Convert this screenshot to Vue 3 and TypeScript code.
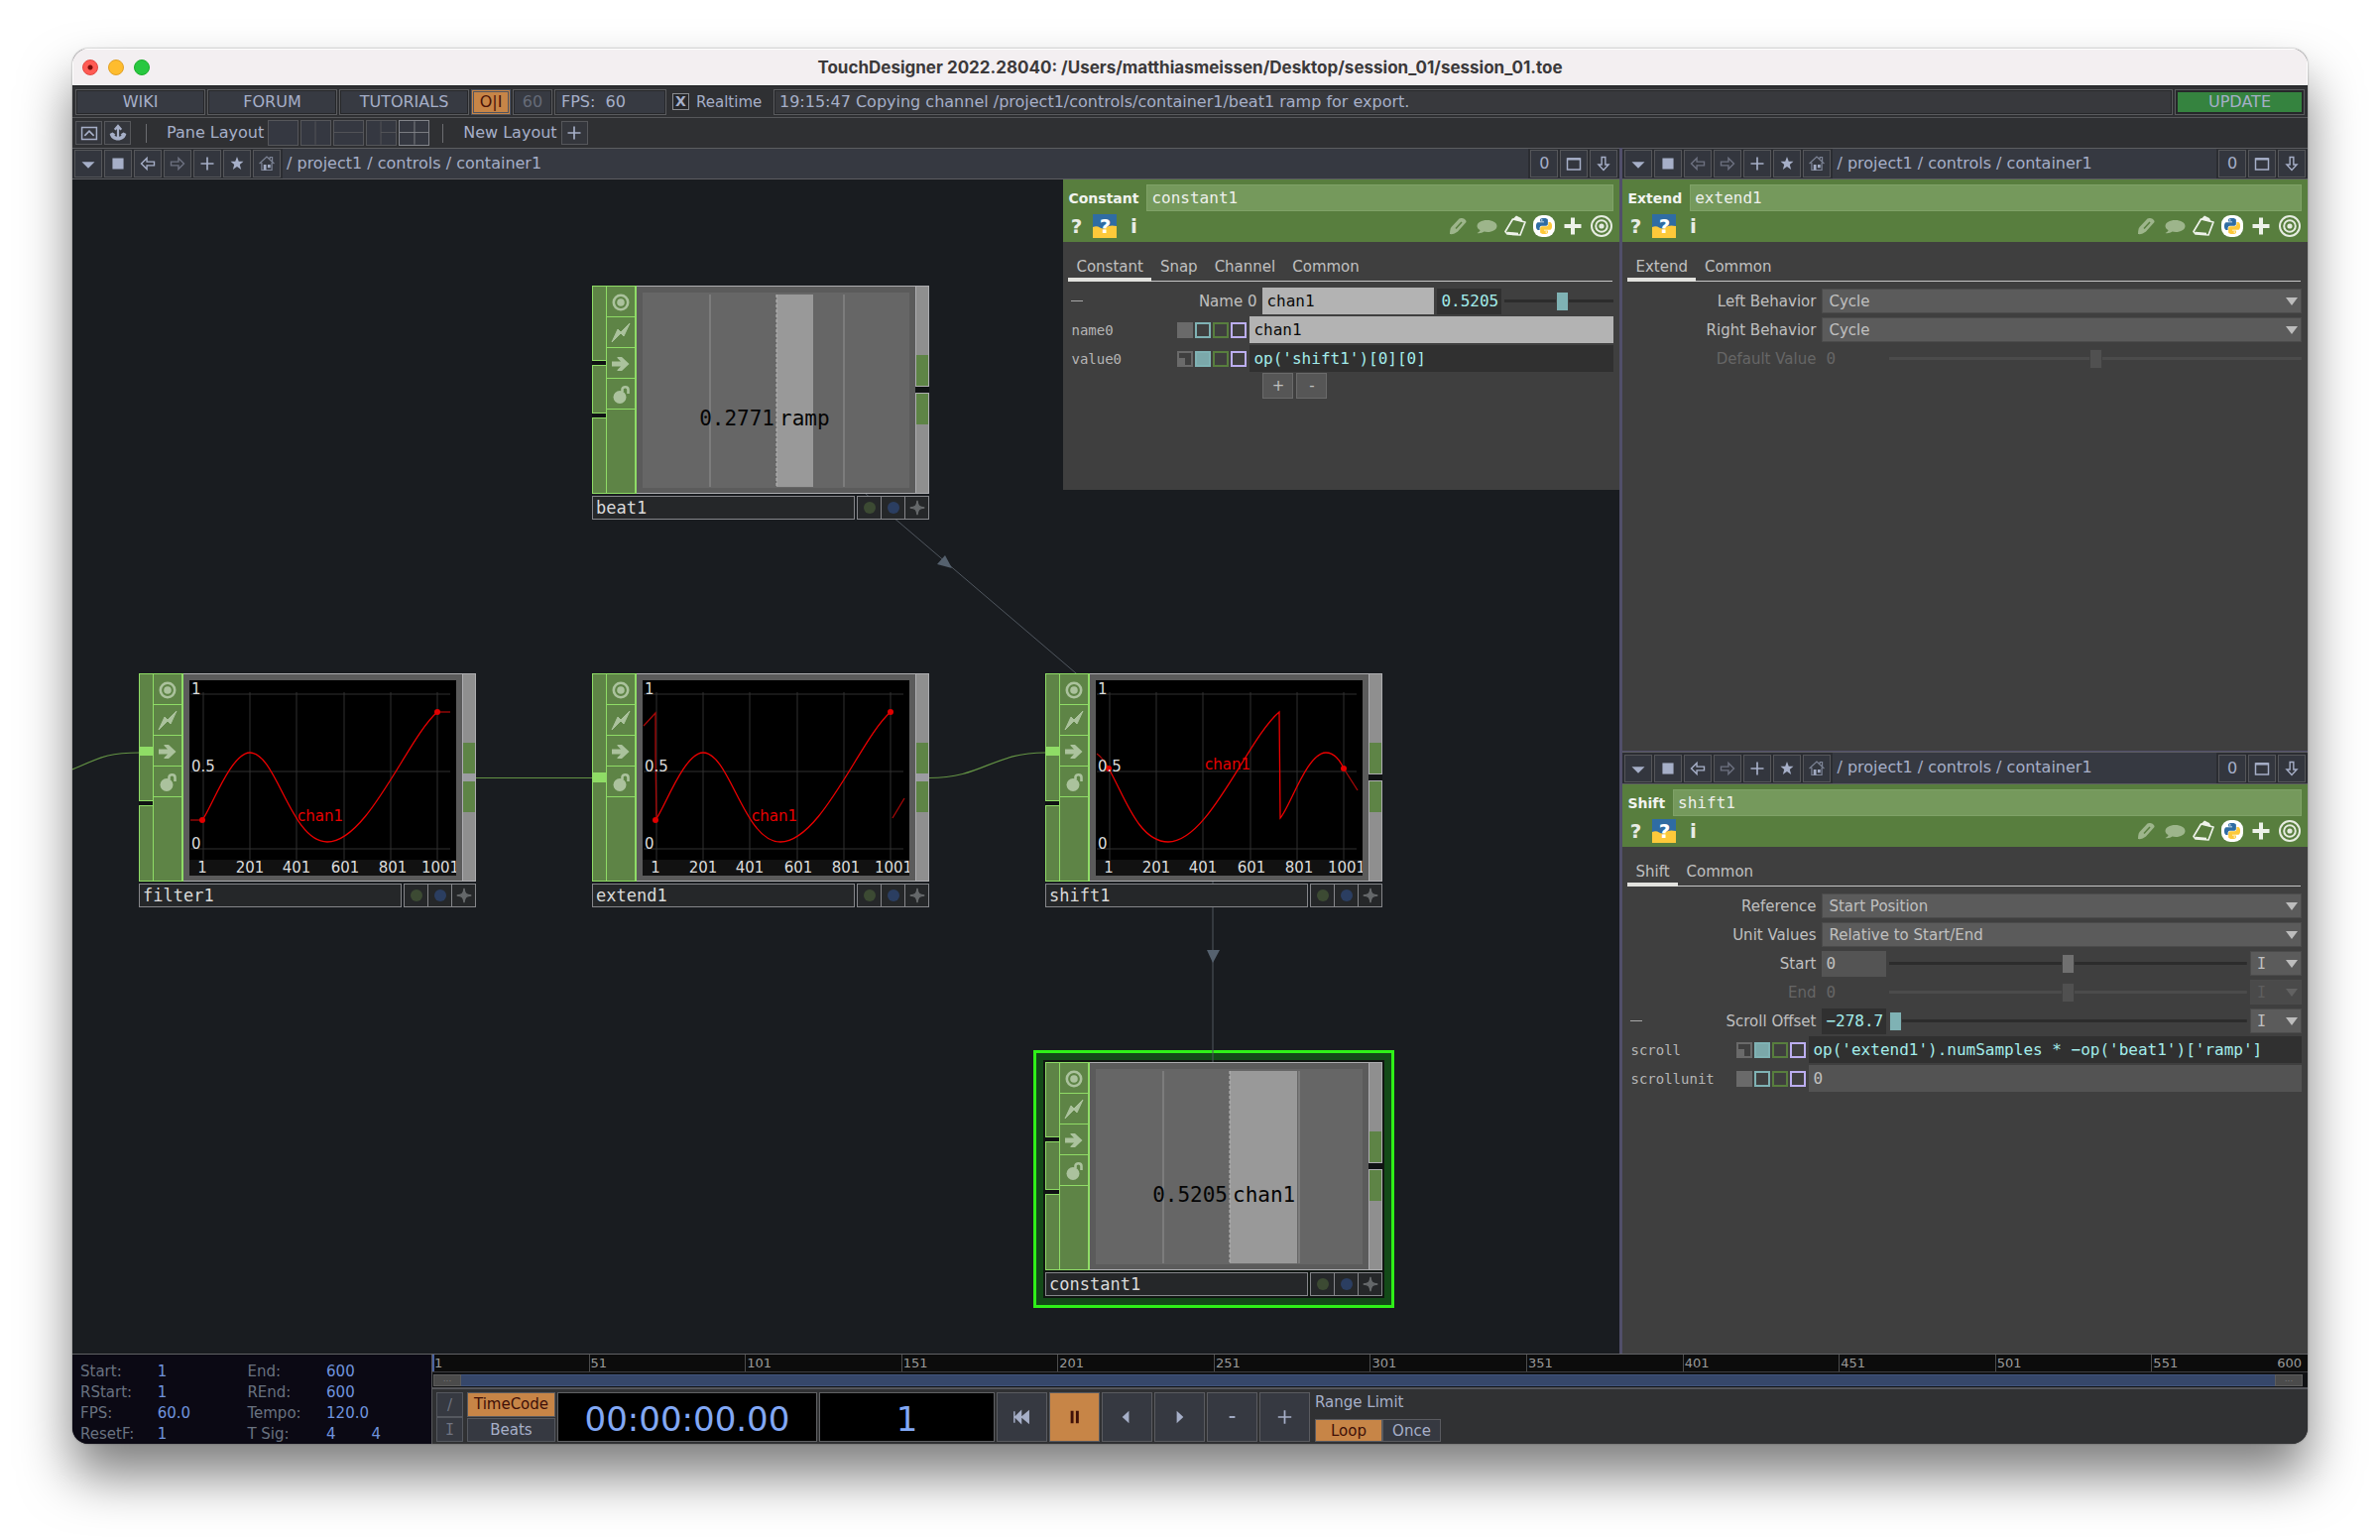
<script setup lang="ts">
interface StripPart { kind: 'seg' | 'gap' | 'wire'; h: number }
interface Meter { value: string; name: string; from: number; to: number; lines: number[] }
interface Graph { main: string; tails: string[]; dots: [number, number][]; label: [number, number] }
interface OpNode {
  name: string
  x: number
  y: number
  selected?: boolean
  inputs: StripPart[]
  wiredOut: boolean
  meter?: Meter
  graph?: Graph
}
interface Row {
  kind: 'menu' | 'number' | 'channel' | 'code' | 'steps'
  label: string
  value: string
  pos?: number
  unit?: boolean
  disabled?: boolean
  driven?: boolean
  open?: boolean
}
interface Sheet { type: string; name: string; tabs: string[]; rows: Row[] }

const twoFree: StripPart[] = [
  { kind: 'seg', h: 76 }, { kind: 'gap', h: 4 }, { kind: 'seg', h: 49 }, { kind: 'gap', h: 4 }, { kind: 'seg', h: 77 },
]
const firstWired: StripPart[] = [
  { kind: 'seg', h: 75 }, { kind: 'wire', h: 7 }, { kind: 'seg', h: 47 }, { kind: 'gap', h: 4 }, { kind: 'seg', h: 77 },
]
const oneWired: StripPart[] = [{ kind: 'seg', h: 101 }, { kind: 'wire', h: 8 }, { kind: 'seg', h: 101 }]

const wave = 'M13 141C22 129 42 73 61 73C88 73 102 163 139 163C180 163 220 58 250 32'

const nodes: OpNode[] = [
  { name: 'beat1', x: 524, y: 107, inputs: twoFree, wiredOut: false,
    meter: { value: '0.2771', name: 'ramp', from: 135, to: 172, lines: [68, 203] } },
  { name: 'filter1', x: 67, y: 498, inputs: firstWired, wiredOut: true,
    graph: { main: wave, tails: ['M1 141H13', 'M250 32H263'], dots: [[13, 141], [250, 32]], label: [109, 142] } },
  { name: 'extend1', x: 524, y: 498, inputs: oneWired, wiredOut: true,
    graph: { main: wave, tails: ['M1 46L13 33V76L14 141', 'M252 139L264 119'], dots: [[13, 141], [250, 32]], label: [110, 142] } },
  { name: 'shift1', x: 981, y: 498, inputs: firstWired, wiredOut: false,
    graph: {
      main: 'M13 89C29 117 43 163 73 163C114 163 153 59 185 32L186 139C196 128 213 73 232 73C239 73 245 78 250 89',
      tails: ['M1 74C5 77 10 83 13 89', 'M250 89L264 111'], dots: [[13, 89], [250, 89]], label: [110, 90],
    } },
  { name: 'constant1', x: 981, y: 890, selected: true, inputs: twoFree, wiredOut: false,
    meter: { value: '0.5205', name: 'chan1', from: 135, to: 203, lines: [68, 205] } },
]

const xTicks = [
  { x: 14, at: 13, t: '1' }, { x: 61, at: 61, t: '201' }, { x: 108, at: 108, t: '401' },
  { x: 156, at: 157, t: '601' }, { x: 203, at: 205, t: '801' }, { x: 250, at: 253, t: '1001' },
]
const yTicks = [{ y: 14, t: '1' }, { y: 92, t: '0.5' }, { y: 170, t: '0' }]
const flags = ['target', 'bolt', 'arrow', 'lock']

const floating: Sheet = {
  type: 'Constant', name: 'constant1', tabs: ['Constant', 'Snap', 'Channel', 'Common'],
  rows: [
    { kind: 'channel', label: 'Name 0', value: '0.5205', pos: 53, open: true },
    { kind: 'code', label: 'name0', value: 'chan1' },
    { kind: 'code', label: 'value0', value: "op('shift1')[0][0]", driven: true },
    { kind: 'steps', label: '', value: '' },
  ],
}
const extendSheet: Sheet = {
  type: 'Extend', name: 'extend1', tabs: ['Extend', 'Common'],
  rows: [
    { kind: 'menu', label: 'Left Behavior', value: 'Cycle' },
    { kind: 'menu', label: 'Right Behavior', value: 'Cycle' },
    { kind: 'number', label: 'Default Value', value: '0', pos: 50, disabled: true },
  ],
}
const shiftSheet: Sheet = {
  type: 'Shift', name: 'shift1', tabs: ['Shift', 'Common'],
  rows: [
    { kind: 'menu', label: 'Reference', value: 'Start Position' },
    { kind: 'menu', label: 'Unit Values', value: 'Relative to Start/End' },
    { kind: 'number', label: 'Start', value: '0', pos: 50, unit: true },
    { kind: 'number', label: 'End', value: '0', pos: 50, unit: true, disabled: true },
    { kind: 'number', label: 'Scroll Offset', value: '−278.7', pos: 0, unit: true, driven: true, open: true },
    { kind: 'code', label: 'scroll', value: "op('extend1').numSamples * −op('beat1')['ramp']", driven: true },
    { kind: 'code', label: 'scrollunit', value: '0' },
  ],
}

const panes: { area: string; sheet: Sheet; back: boolean }[] = [
  { area: 'network', sheet: floating, back: true },
  { area: 'upper', sheet: extendSheet, back: false },
  { area: 'lower', sheet: shiftSheet, back: true },
]

const layouts = ['', 'M15 0V25', 'M0 12H31', 'M15 0V25M15 12H31', 'M16 0V25M0 12H31']
const headIcons = ['pencil', 'bubble', 'note', 'python', 'plusbold', 'rings']
const frames = Array.from({ length: 12 }, (_, i) => i * 50 + 1)
const info = [
  ['Start:', '1', 'End:', '600', ''],
  ['RStart:', '1', 'REnd:', '600', ''],
  ['FPS:', '60.0', 'Tempo:', '120.0', ''],
  ['ResetF:', '1', 'T Sig:', '4', '4'],
]
</script>

<template>
  <svg class="defs" aria-hidden="true">
    <symbol id="i-menu" viewBox="0 0 28 28"><path d="M7 12H21L14 19Z" fill="currentColor" /></symbol>
    <symbol id="i-square" viewBox="0 0 28 28"><path d="M8 8H20V20H8Z" fill="currentColor" /></symbol>
    <symbol id="i-back" viewBox="0 0 28 28"><path d="M7 14L13 8V12H21V16H13V20Z" fill="none" stroke="currentColor" stroke-width="1.5" /></symbol>
    <symbol id="i-next" viewBox="0 0 28 28"><path d="M21 14L15 8V12H7V16H15V20Z" fill="none" stroke="currentColor" stroke-width="1.5" /></symbol>
    <symbol id="i-plus" viewBox="0 0 28 28"><path d="M14 7V21M7 14H21" fill="none" stroke="currentColor" stroke-width="1.8" /></symbol>
    <symbol id="i-star" viewBox="0 0 28 28"><path d="M14 6.500L15.900 11.700H21L17 15.100L18.500 20.500L14 17.300L9.500 20.500L11 15.100L7 11.700H12.100Z" fill="currentColor" /></symbol>
    <symbol id="i-home" viewBox="0 0 28 28">
      <path d="M6 14L14 6.500L22 14M17.500 8.500V7H20V12M8.500 13V21H19.500V13" fill="none" stroke="#7d8496" stroke-width="1.300" />
      <path d="M10.500 15H13.500V21H10.500ZM15 15H18V18.500H15Z" fill="#a3acc4" />
    </symbol>
    <symbol id="i-pane" viewBox="0 0 28 28"><path d="M7 8.500H21V20.500H7Z" fill="none" stroke="currentColor" stroke-width="1.600" /><path d="M7 9H21" stroke="currentColor" stroke-width="2.600" /></symbol>
    <symbol id="i-down" viewBox="0 0 28 28"><path d="M12 7H16V15H19.500L14 21L8.500 15H12Z" fill="none" stroke="currentColor" stroke-width="1.500" /></symbol>
    <symbol id="i-up" viewBox="0 0 28 28"><path d="M6 8H22V21H6Z" fill="none" stroke="currentColor" stroke-width="1.600" /><path d="M9 17L14 12L19 17" fill="none" stroke="currentColor" stroke-width="1.800" /></symbol>
    <symbol id="i-anchor" viewBox="0 0 28 28">
      <path d="M14 6V19M10.500 10.500L14 6.500L17.500 10.500" fill="none" stroke="currentColor" stroke-width="2.400" />
      <path d="M5 15L8 13.500L11.500 15.500C10.500 15.500 10 16 10.500 17C11.500 18.500 16.500 18.500 17.500 17C18 16 17.500 15.500 16.500 15.500L20 13.500L23 15C22 19.500 18.500 22 14 22C9.500 22 6 19.500 5 15Z" fill="currentColor" />
    </symbol>
    <symbol id="i-pencil" viewBox="0 0 24 24"><path d="M4 20C4 17 4.500 14.500 5.500 13L13.500 4.500C15 3 21 4.500 20.500 8L12 17.500C9.500 19.500 6.500 20.500 4 20Z" fill="#9db58b" /><path d="M10 14.500L16 8" stroke="#587e3e" stroke-width="1.500" /></symbol>
    <symbol id="i-bubble" viewBox="0 0 24 24"><path d="M12.500 6C18 6 22.500 8.500 22.500 12C22.500 15.500 18 18 13 18C11.500 18 10.500 17.800 9.500 17.500C7.500 19 5 19.500 2.500 19C4.500 18 5.500 17 5.500 16C3.500 15 2.500 13.500 2.500 12C2.500 8.500 7 6 12.500 6Z" fill="#9db58b" /></symbol>
    <symbol id="i-note" viewBox="0 0 24 24">
      <path d="M9.500 5L22 8L17 21L4 20L2 17.500ZM4 18.500L15 19.500" fill="none" stroke="#eef2ea" stroke-width="1.700" stroke-linejoin="round" />
      <path d="M9.500 5L13 1.500L18 4L20 8Z" fill="#eef2ea" />
    </symbol>
    <symbol id="i-pylogo" viewBox="0 0 24 24"><path d="M14.250.18l.9.200.730.260.590.300.450.320.340.340.250.340.160.330.100.300.040.260.020.200-.010.130V8.500l-.050.630-.130.550-.210.460-.260.380-.300.310-.330.250-.350.190-.350.140-.330.100-.300.070-.260.040-.210.020H8.770l-.690.050-.590.140-.500.220-.410.270-.330.320-.270.350-.200.360-.150.370-.100.350-.070.320-.040.270-.020.210v3.060H3.170l-.210-.030-.280-.070-.320-.120-.350-.180-.360-.260-.360-.360-.350-.460-.320-.590-.280-.730-.210-.880-.140-1.050-.050-1.230.060-1.220.160-1.040.240-.870.320-.710.360-.570.400-.440.420-.330.420-.240.400-.160.360-.100.320-.050.240-.010h.160l.060.010h8.160v-.830H6.180l-.010-2.750-.020-.370.050-.340.110-.310.170-.280.250-.260.310-.230.380-.200.440-.180.510-.150.580-.120.640-.100.710-.060.770-.040.840-.020 1.270.050zm-6.300 1.980l-.230.330-.080.410.080.410.230.340.330.220.410.090.410-.090.330-.220.230-.340.080-.410-.080-.410-.230-.330-.330-.220-.410-.090-.410.090z" /></symbol>
    <symbol id="i-python" viewBox="0 0 24 24">
      <rect x="1" y="1" width="22" height="22" rx="9" fill="#fff" />
      <use href="#i-pylogo" x="4" y="4" width="16" height="16" fill="#2f6ca3" />
      <use href="#i-pylogo" x="4" y="4" width="16" height="16" fill="#fdc93a" transform="rotate(180 12 12)" />
    </symbol>
    <symbol id="i-plusbold" viewBox="0 0 24 24"><path d="M12 3.500V20.500M3.500 12H20.500" stroke="#eef2ea" stroke-width="4" /></symbol>
    <symbol id="i-rings" viewBox="0 0 24 24"><g fill="none" stroke="#e6ece1" stroke-width="2"><circle cx="12" cy="12" r="10" /><circle cx="12" cy="12" r="5.800" /></g><circle cx="12" cy="12" r="2.600" fill="#e6ece1" /></symbol>
    <symbol id="i-target" viewBox="0 0 28 28"><circle cx="14" cy="15" r="7.200" fill="none" stroke="currentColor" stroke-width="2.600" /><circle cx="14" cy="15" r="3.800" fill="currentColor" /></symbol>
    <symbol id="i-bolt" viewBox="0 0 28 28"><path d="M5 24L11 11L14 14L23 5L17 18L14 15Z" fill="currentColor" stroke="currentColor" stroke-width="1" /></symbol>
    <symbol id="i-arrow" viewBox="0 0 28 28"><path d="M5 12.500H14L10.500 9V8H15L22.500 15L15 22H10.500V21L14 17.500H5Z" fill="currentColor" /></symbol>
    <symbol id="i-lock" viewBox="0 0 28 28"><circle cx="13" cy="17.500" r="6.500" fill="currentColor" /><path d="M15.500 12V9.500C15.500 6.500 21.500 6.500 21.500 10V14" fill="none" stroke="currentColor" stroke-width="2.600" /></symbol>
    <symbol id="i-spark" viewBox="0 0 22 22"><path d="M11 3C11.500 9 13 10.500 19 11C13 11.500 11.500 13 11 19C10.500 13 9 11.500 3 11C9 10.500 10.500 9 11 3Z" fill="#65686a" stroke="#65686a" stroke-width="1.500" /></symbol>
  </svg>

  <div class="desk">
    <div class="window">
      <header class="titlebar">
        <div class="lights">
          <button class="lamp red" aria-label="Close"></button>
          <button class="lamp amber" aria-label="Minimise"></button>
          <button class="lamp green" aria-label="Zoom"></button>
        </div>
        <h1>TouchDesigner 2022.28040: /Users/matthiasmeissen/Desktop/session_01/session_01.toe</h1>
      </header>

      <div class="bar status">
        <button class="box wide">WIKI</button>
        <button class="box wide">FORUM</button>
        <button class="box wide">TUTORIALS</button>
        <button class="box small on">O|I</button>
        <button class="box small dim">60</button>
        <div class="box fps">FPS:&nbsp; 60</div>
        <label class="realtime"><input type="checkbox" checked />Realtime</label>
        <div class="box log">19:15:47 Copying channel /project1/controls/container1/beat1 ramp for export.</div>
        <button class="box update"><span>UPDATE</span></button>
      </div>

      <div class="bar layoutbar">
        <button class="tool" aria-label="Collapse"><svg><use href="#i-up" /></svg></button>
        <button class="tool" aria-label="Bookmark"><svg><use href="#i-anchor" /></svg></button>
        <i class="rule"></i>
        <span class="caption">Pane Layout</span>
        <div class="layouts">
          <button v-for="(d, i) in layouts" :key="i" class="layout" :class="{ bright: i === 4 }" :aria-label="'Layout ' + (i + 1)">
            <svg viewBox="0 0 31 25"><path :d="d" /></svg>
          </button>
        </div>
        <i class="rule"></i>
        <span class="caption">New Layout</span>
        <button class="tool" aria-label="Add layout"><svg><use href="#i-plus" /></svg></button>
      </div>

      <main class="panes">
        <section v-for="pane in panes" :key="pane.area" class="pane" :class="pane.area">
          <nav class="pathbar">
            <button class="cell" aria-label="Pane type"><svg><use href="#i-menu" /></svg></button>
            <button class="cell" aria-label="Split"><svg><use href="#i-square" /></svg></button>
            <button class="cell" :class="{ off: !pane.back }" aria-label="Back"><svg><use href="#i-back" /></svg></button>
            <button class="cell off" aria-label="Forward"><svg><use href="#i-next" /></svg></button>
            <button class="cell" aria-label="Add"><svg><use href="#i-plus" /></svg></button>
            <button class="cell" aria-label="Favourites"><svg><use href="#i-star" /></svg></button>
            <button class="cell" aria-label="Home"><svg><use href="#i-home" /></svg></button>
            <span class="path">/ <a href="#project1">project1</a> / <a href="#controls">controls</a> / <a href="#container1">container1</a></span>
            <button class="cell">0</button>
            <button class="cell" aria-label="Maximise"><svg><use href="#i-pane" /></svg></button>
            <button class="cell" aria-label="Pin"><svg><use href="#i-down" /></svg></button>
          </nav>

          <div class="stage">
            <template v-if="pane.area === 'network'">
              <svg class="wires">
                <path d="M0 595C30 582 36 578 68 578M407 603.500H524M864 603.500C918 603.500 928 578 981 578" />
              </svg>

              <article v-for="n in nodes" :key="n.name" class="node" :class="{ selected: n.selected }" :style="{ left: n.x + 'px', top: n.y + 'px' }">
                <div class="body">
                  <div class="strip">
                    <i v-for="(p, i) in n.inputs" :key="i" :class="p.kind" :style="{ height: p.h + 'px' }"></i>
                  </div>
                  <div class="flags">
                    <button v-for="f in flags" :key="f" :aria-label="f"><svg><use :href="'#i-' + f" /></svg></button>
                  </div>
                  <div class="viewer">
                    <svg v-if="n.meter" class="meter" viewBox="0 0 269 197">
                      <rect width="269" height="197" fill="#666" />
                      <rect :x="n.meter.from" y="2" :width="n.meter.to - n.meter.from" height="194" fill="#999" />
                      <path v-for="x in n.meter.lines" :key="x" :d="`M${x} 2V196`" stroke="#858585" stroke-width="1.500" />
                      <path :d="`M${n.meter.from} 2V196`" stroke="#bbb" stroke-dasharray="3 2" />
                      <text x="133" y="134" text-anchor="end">{{ n.meter.value }}</text>
                      <text x="138" y="134">{{ n.meter.name }}</text>
                    </svg>
                    <svg v-if="n.graph" class="graph" viewBox="0 0 269 197">
                      <rect width="269" height="197" />
                      <rect y="181" width="269" height="16" class="foot" />
                      <path v-for="t in xTicks" :key="t.t" :d="`M${t.x} 12V181`" class="grid" />
                      <path v-for="t in yTicks" :key="t.t" :d="`M1 ${t.y}H263`" class="grid" />
                      <path v-for="d in n.graph.tails" :key="d" :d="d" class="curve tail" />
                      <path :d="n.graph.main" class="curve" />
                      <circle v-for="(c, i) in n.graph.dots" :key="i" :cx="c[0]" :cy="c[1]" r="3" fill="#e00000" />
                      <text v-for="t in yTicks" :key="t.t" x="2" :y="t.y">{{ t.t }}</text>
                      <text v-for="t in xTicks" :key="t.t" :x="t.at" y="194" text-anchor="middle">{{ t.t }}</text>
                      <text :x="n.graph.label[0]" :y="n.graph.label[1]" class="chan">chan1</text>
                    </svg>
                  </div>
                  <div class="strip out">
                    <i class="lead"></i>
                    <i class="port"></i>
                    <i :class="n.wiredOut ? 'join' : 'gap'"></i>
                    <i class="port"></i>
                    <i class="rest"></i>
                  </div>
                </div>
                <div class="tag">
                  <span class="opname">{{ n.name }}</span>
                  <button class="dot olive" aria-label="Display"></button>
                  <button class="dot navy" aria-label="Render"></button>
                  <button class="dot" aria-label="Viewer active"><svg><use href="#i-spark" /></svg></button>
                </div>
              </article>

              <svg class="wires refs">
                <path d="M793 311L1032 515M1150 700V892" />
                <path class="head" d="M887 392L872 388L880 379ZM1144 777H1157L1150 790Z" />
              </svg>
            </template>

            <div class="sheet">
              <header class="ophead">
                <div class="opline">
                  <label :for="'op-' + pane.sheet.name">{{ pane.sheet.type }}</label>
                  <input :id="'op-' + pane.sheet.name" :value="pane.sheet.name" />
                </div>
                <div class="opicons">
                  <button class="q">?</button>
                  <button class="q py"><svg viewBox="0 0 24 24"><path d="M0 0H24V24H0Z" fill="#2f6ca3" /><path d="M0 13C6 10 8 16 12 14C17 11 19 11 24 12V24H0Z" fill="#fdc93a" /></svg><span>?</span></button>
                  <button class="q">i</button>
                  <span class="grow"></span>
                  <button v-for="h in headIcons" :key="h" class="hi" :aria-label="h"><svg><use :href="'#i-' + h" /></svg></button>
                </div>
              </header>
              <div class="tabs">
                <button v-for="(t, i) in pane.sheet.tabs" :key="t" :class="{ active: i === 0 }">{{ t }}</button>
              </div>
              <div class="rows">
                <div v-for="r in pane.sheet.rows" :key="r.label" class="row" :class="[r.kind, { disabled: r.disabled, driven: r.driven }]">
                  <template v-if="r.kind === 'code'">
                    <label class="key" :for="pane.sheet.name + r.label">{{ r.label }}</label>
                    <span class="modes"><button class="m1" aria-label="Constant"></button><button class="m2" aria-label="Expression"></button><button class="m3" aria-label="Export"></button><button class="m4" aria-label="Bind"></button></span>
                    <input :id="pane.sheet.name + r.label" class="field" :class="{ pale: r.value === 'chan1' }" :value="r.value" />
                  </template>
                  <template v-else>
                    <span class="lab">
                      <button v-if="r.open" class="fold" aria-label="Fold"></button>
                      <label v-if="r.label" :for="pane.sheet.name + r.label">{{ r.label }}</label>
                    </span>
                    <template v-if="r.kind === 'menu'">
                      <span class="pick grow"><select :id="pane.sheet.name + r.label"><option>{{ r.value }}</option></select></span>
                    </template>
                    <template v-else-if="r.kind === 'steps'">
                      <button class="step">+</button><button class="step">-</button>
                    </template>
                    <template v-else>
                      <input v-if="r.kind === 'channel'" :id="pane.sheet.name + r.label" class="field pale" value="chan1" />
                      <input :id="r.kind === 'channel' ? undefined : pane.sheet.name + r.label" class="num" :class="{ lit: r.driven || r.kind === 'channel' }" :value="r.value" :disabled="r.disabled" :aria-label="r.label + ' value'" />
                      <input type="range" min="0" max="100" :value="r.pos" :class="{ lit: r.driven || r.kind === 'channel' }" :disabled="r.disabled" :aria-label="r.label + ' slider'" />
                      <span v-if="r.unit" class="pick unit"><select :aria-label="r.label + ' unit'" :disabled="r.disabled"><option>I</option></select></span>
                    </template>
                  </template>
                </div>
              </div>
            </div>
          </div>
        </section>
      </main>

      <footer class="timeline">
        <table class="info">
          <tbody>
            <tr v-for="(l, i) in info" :key="i">
              <th>{{ l[0] }}</th><td>{{ l[1] }}</td><th>{{ l[2] }}</th><td>{{ l[3] }}</td><td>{{ l[4] }}</td>
            </tr>
          </tbody>
        </table>
        <div class="transport">
          <div class="ruler">
            <span v-for="f in frames" :key="f">{{ f }}</span>
            <b>600</b>
          </div>
          <div class="range"><i>...</i><span></span><i>...</i></div>
          <div class="controls">
            <div class="stack narrow"><button>/</button><button class="mono">I</button></div>
            <div class="stack units"><button class="on">TimeCode</button><button>Beats</button></div>
            <output class="clock">00:00:00.00</output>
            <output class="clock frame">1</output>
            <button class="play" aria-label="Rewind"><svg viewBox="0 0 50 50"><path d="M17 19V31M24 19V31L18 25ZM32 19V31L25 25Z" fill="currentColor" stroke="currentColor" stroke-width="1.500" /></svg></button>
            <button class="play on" aria-label="Pause"><svg viewBox="0 0 50 50"><path d="M21 18.500H24V31.500H21ZM26.500 18.500H29.500V31.500H26.500Z" fill="currentColor" /></svg></button>
            <button class="play" aria-label="Play reverse"><svg viewBox="0 0 50 50"><path d="M27 18.500V31.500L20 25Z" fill="currentColor" /></svg></button>
            <button class="play" aria-label="Play"><svg viewBox="0 0 50 50"><path d="M22 18.500V31.500L29 25Z" fill="currentColor" /></svg></button>
            <button class="play" aria-label="Step back"><svg viewBox="0 0 50 50"><path d="M22 25H28" stroke="currentColor" stroke-width="2" /></svg></button>
            <button class="play" aria-label="Step forward"><svg viewBox="0 0 50 50"><path d="M25 18V32M18 25H32" stroke="currentColor" stroke-width="1.800" /></svg></button>
            <div class="limit">
              <span>Range Limit</span>
              <div><button class="on">Loop</button><button>Once</button></div>
            </div>
          </div>
        </div>
      </footer>
    </div>
  </div>
</template>

<style>
body { background: #fff; }
</style>

<style scoped>
.defs { position: absolute; width: 0; height: 0; }
.desk {
  box-sizing: border-box;
  min-height: 100vh;
  display: flex;
  padding: 49px 73px 97px;
  font-family: "DejaVu Sans", sans-serif;
  font-size: 15px;
  line-height: 20px;
  color: #a6afc8;
}
.desk *, .desk *::before, .desk *::after { box-sizing: border-box; }
button, input, select { font: inherit; color: inherit; margin: 0; padding: 0; border: 0; border-radius: 0; background: none; }
button { display: flex; align-items: center; justify-content: center; }
input { min-width: 0; }
a { color: inherit; text-decoration: none; }
.grow { flex: 1; }

.window {
  flex: 1;
  min-width: 0;
  display: flex;
  flex-direction: column;
  border-radius: 16px;
  overflow: hidden;
  background: #2f3033;
  box-shadow: 0 0 2px rgba(0, 0, 0, .45), 0 32px 52px rgba(0, 0, 0, .5);
}
.titlebar { position: relative; height: 37px; display: flex; align-items: center; justify-content: center; background: #f3eff1; border: 1px solid #fff; }
.titlebar h1 { margin: 0; font: 700 17px/24px Inter, sans-serif; color: #3b393a; }
.lights { position: absolute; left: 9px; top: 10px; display: flex; gap: 10px; }
.lamp { width: 16px; height: 16px; border-radius: 50%; }
.red { background: radial-gradient(circle, #7b0c0a 0 2px, #ff5b54 3px); border: 1px solid #e2463f; }
.amber { background: #febc2e; border: 1px solid #e0a028; }
.green { background: #28c840; border: 1px solid #1dad2c; }

.bar { display: flex; align-items: center; font-size: 16px; }
.status { height: 32px; padding: 0 3px; gap: 2px; border-top: 1px solid #1c1d20; }
.box { height: 26px; border: 1px solid #5a5b5e; outline: 1px solid #26272a; outline-offset: -2px; background: #373a42; display: flex; align-items: center; justify-content: center; }
.wide { width: 131px; }
.small { width: 40px; }
.box.on { background: #c78547; border: 3px double #50545f; color: #4a1208; outline: 0; }
.dim { color: #666b78; }
.fps { width: 113px; justify-content: flex-start; padding-left: 6px; }
.realtime { display: flex; align-items: center; gap: 7px; width: 104px; padding-left: 4px; font-size: 15px; }
.realtime input { appearance: none; width: 17px; height: 17px; border: 1px solid #8a8c90; background: #26272a; display: flex; align-items: center; justify-content: center; }
.realtime input:checked::after { content: "X"; font: 700 14px/15px "DejaVu Sans", sans-serif; color: #a6afc8; }
.log { flex: 1; justify-content: flex-start; padding-left: 5px; background: #38393d; white-space: nowrap; }
.update { width: 131px; padding: 2px; background: #26272a; }
.update span { flex: 1; background: #35833f; line-height: 20px; }

.layoutbar { height: 31px; padding: 0 3px; border-top: 1px solid #56575a; }
.tool { width: 27px; height: 24px; margin-right: 2px; border: 1px solid #56575b; background: #34363c; }
.tool svg { width: 26px; height: 26px; flex: none; }
.rule { width: 1px; height: 19px; margin: 0 20px 0 13px; background: #6b6c70; }
.caption { margin-right: 4px; }
.layouts { display: flex; gap: 2px; }
.layout { width: 31px; height: 26px; border: 1px solid #55565a; background: #353841; }
.layout svg { width: 100%; height: 100%; }
.layout path { stroke: #55565a; fill: none; }
.layout.bright { border-color: #82848a; }
.layout.bright path { stroke: #82848a; }

.panes { flex: 1; display: grid; grid-template: minmax(0, 1fr) minmax(0, 1fr) / minmax(0, 9fr) minmax(0, 4fr); }
.pane { display: flex; flex-direction: column; min-width: 0; }
.network { grid-row: 1 / 3; }
.upper, .lower { border-left: 3px solid #514f6a; background: #3f3f3f; }
.lower { border-top: 1px solid #514f6a; }
.pathbar { display: flex; align-items: center; gap: 2px; height: 32px; padding: 0 2px; border-top: 1px solid #5c5d61; border-bottom: 1px solid #5c5d61; background: #2b2d32; font-size: 16px; }
.lower .pathbar { height: 33px; }
.cell { width: 28px; height: 28px; flex: none; border: 1px solid #55565a; background: #33363e; }
.cell svg { width: 26px; height: 26px; }
.cell.off svg { color: #6d7180; }
.path { flex: 1; align-self: stretch; background: #363941; padding-left: 4px; line-height: 30px; }
.stage { position: relative; flex: 1; }
.network .stage { background: #191c20; overflow: hidden; }

.wires { position: absolute; inset: 0; width: 100%; height: 100%; }
.wires path { fill: none; stroke: #639244; stroke-width: 1.2; }
.refs { pointer-events: none; }
.refs path { stroke: #50575f; stroke-width: 1; }
.refs .head { fill: #55616e; stroke: none; }

.node { position: absolute; width: 340px; }
.selected::before { content: ""; position: absolute; inset: -12px; border: 3px solid #2ff018; background: #134a18; }
.selected::after { content: ""; position: absolute; inset: -2px; z-index: 0; background: #101612; }
.body { position: relative; z-index: 1; display: flex; height: 210px; }
.strip { width: 14px; display: flex; flex-direction: column; }
.seg { background: #5e8446; border: 1px solid #8fdc66; border-right: 0; }
.wire { background: #8fdc66; }
.gap { background: #101214; }
.flags { width: 31px; background: #5e8446; border: 1px solid #8fdc66; border-right-width: 2px; }
.flags button { width: 100%; height: 31px; border-bottom: 1px solid #8fdc66; color: #abc29d; }
.flags svg { width: 28px; height: 28px; flex: none; }
.viewer { flex: 1; padding: 6px; border: solid #adadb0; border-width: 1px 0; background: #5b5b5b; }
.viewer svg { display: block; width: 100%; height: 197px; }
.meter text { font: 21px "DejaVu Sans Mono", monospace; fill: #050505; }
.graph rect { fill: #000; }
.graph .foot { fill: #111; }
.grid { stroke: #303030; }
.graph text { font: 15px "DejaVu Sans", sans-serif; fill: #dcdcdc; }
.graph .chan { fill: #e80000; }
.curve { fill: none; stroke: #ec0000; stroke-width: 1.3; }
.tail { stroke: #a80808; }
.out { border: 1px solid #adadb0; background: #8f8f8f; }
.lead { height: 69px; }
.port { height: 31px; background: #5e8446; }
.join { height: 8px; background: #9c9ca2; }
.out .gap { height: 8px; border: solid #adadb0; border-width: 1px 0; margin: 0 -1px; }
.rest { flex: 1; }
.tag { position: relative; z-index: 1; display: flex; height: 24px; margin-top: 2px; }
.opname { flex: 1; margin-right: 3px; padding-left: 3px; border: 1px solid #85868a; background: #252729; color: #dadada; font: 17px/22px "DejaVu Sans Mono", monospace; }
.dot { width: 25px; margin-left: -1px; border: 1px solid #85868a; background: #252729; }
.dot::before { content: ""; width: 12px; height: 12px; border-radius: 50%; }
.dot svg { width: 20px; height: 20px; flex: none; }
.dot:last-child::before { display: none; }
.olive::before { background: #3c4a33; }
.navy::before { background: #2b3e61; }

.sheet { background: #3f3f3f; color: #c0c0c0; }
.network .sheet { position: absolute; right: 0; top: 0; width: 561px; height: 313px; }
.ophead { height: 63px; padding: 5px 6px 0 5px; background: #587e3e; }
.opline { display: flex; align-items: center; gap: 8px; }
.opline label { font-weight: 700; font-size: 14px; color: #f1f3ef; }
.opline input { flex: 1; height: 27px; padding-left: 4px; background: #75995c; border: 1px solid #7fa267; color: #eef0ec; font: 16px/25px "DejaVu Sans Mono", monospace; }
.opicons { display: flex; align-items: center; gap: 5px; height: 30px; }
.q { width: 16px; height: 24px; font-weight: 700; font-size: 20px; color: #e8ece5; }
.opicons .q + .q { margin-left: 4px; }
.py { position: relative; width: 24px; color: #fff; }
.py svg { position: absolute; inset: 0; width: 24px; height: 24px; }
.py span { position: relative; }
.hi, .hi svg { width: 24px; height: 24px; }
.tabs { display: flex; gap: 1px; height: 40px; margin: 0 7px 0 5px; border-bottom: 1px solid #c6c6c6; }
.tabs button { height: 40px; padding: 14px 8px 0; border-bottom: 4px solid transparent; }
.tabs .active { border-bottom-color: #e2e2de; }
.rows { padding: 5px 6px 0 5px; }
.row { display: flex; align-items: center; height: 29px; }
.lab { position: relative; width: 190px; margin-right: 6px; display: flex; align-items: center; justify-content: flex-end; }
.fold { width: 12px; height: 1px; margin: 0 auto 0 3px; background: #a8a8a8; }
.pick { position: relative; display: flex; }
.pick select { appearance: none; width: 100%; height: 25px; padding-left: 6px; background: #5b5b5b; border: 1px solid #4b4b4b; }
.pick::after { content: ""; position: absolute; right: 4px; top: 9px; border: 6px solid transparent; border-top: 8px solid #bdbdbd; border-bottom: 0; pointer-events: none; }
.unit { width: 52px; }
.unit select { font-family: "DejaVu Sans Mono", monospace; }
.num { width: 65px; height: 26px; padding-left: 4px; background: #545454; font: 16px/26px "DejaVu Sans Mono", monospace; }
.num.lit { background: #303030; color: #a3ecea; }
.field { flex: 1; height: 27px; padding-left: 4px; background: #535353; font: 16px/27px "DejaVu Sans Mono", monospace; }
.driven .field { background: #303030; color: #a3ecea; }
.field.pale { background: #b3b3b3; color: #0a0a0a; }
.channel .pale { margin-right: 3px; }
input[type="range"] { appearance: none; flex: 1; height: 27px; margin: 0 3px; background: linear-gradient(#2c2c2c, #2c2c2c) center / 100% 3px no-repeat; }
input[type="range"]:last-child { margin-right: 0; }
.channel input[type="range"] { flex: none; width: 110px; }
input[type="range"]::-webkit-slider-thumb { appearance: none; width: 13px; height: 20px; background: #707070; border: 1px solid #404040; }
input[type="range"].lit::-webkit-slider-thumb { background: #7fb2b4; }
.disabled { color: #666; }
.disabled .num { background: none; color: #666; }
.disabled select { background: #4a4a4a; color: #5e5e5e; opacity: 1; }
.disabled .pick::after { border-top-color: #626262; }
.disabled input[type="range"] { background-image: linear-gradient(#4b4b4b, #4b4b4b); }
.disabled input[type="range"]::-webkit-slider-thumb { background: #505050; }
.key { width: 110px; padding-left: 3px; font: 14px/20px "DejaVu Sans Mono", monospace; color: #b5b5b5; }
.modes { display: flex; gap: 2px; margin-right: 3px; }
.modes button { width: 16px; height: 16px; }
.modes .m1 { background: #6a6a6a; }
.modes .m2 { border: 2px solid #7fb2b4; }
.modes .m3 { border: 2px solid #587e3e; }
.modes .m4 { border: 2px solid #bcaef0; }
.driven .modes .m1 { background: linear-gradient(#6a6a6a, #6a6a6a) 0 100% / 6px 7px no-repeat; border: 2px solid #6a6a6a; }
.driven .modes .m2 { background: #7ba8aa; }
.steps { align-items: flex-start; }
.step { width: 31px; height: 26px; margin-right: 3px; border: 1px solid #6a6a6a; background: #565656; }

.timeline { display: flex; height: 91px; border-top: 1px solid #606164; }
table.info { width: 363px; padding: 7px 0 0 6px; background: #0b0914; border-spacing: 0; border-right: 1px solid #56575a; table-layout: fixed; }
.info th { width: 79px; padding: 0 0 0 2px; text-align: left; font-weight: 400; color: #697280; }
.info td { padding: 0; width: 90px; color: #6f93de; }
.info tr > :nth-child(3) { width: 79px; padding: 0; }
.info tr > :nth-child(4) { width: 45px; }
.info tr > :nth-child(5) { width: 60px; }
.transport { flex: 1; min-width: 0; display: flex; flex-direction: column; background: #303133; }
.ruler { position: relative; display: flex; height: 18px; background: #0c0c0c; color: #9a9a9a; font-size: 13px; line-height: 17px; border-bottom: 1px solid #3c3d40; }
.ruler span { flex: 1; padding-left: 1px; border-left: 1px solid #4c4c4c; }
.ruler span:first-child { border-left: 2px solid #4a62a0; padding-left: 0; }
.ruler b { position: absolute; right: 6px; top: 0; font-weight: 400; }
.range { display: flex; height: 15px; padding: 2px 5px 1px 1px; background: #101113; }
.range i { width: 28px; background: #4b4b4b; border: 1px solid #5c5c5c; color: #777; font: 9px/6px "DejaVu Sans", sans-serif; text-align: center; }
.range span { flex: 1; background: #36476a; border: 1px solid #40547c; border-width: 1px 0; }
.controls { display: flex; gap: 2px; height: 57px; padding: 3px 4px 3px; border-top: 2px solid #54555a; }
.stack { display: flex; flex-direction: column; height: 50px; }
.stack button { flex: 1; border: 1px solid #55585f; background: #363941; }
.narrow { width: 27px; margin-right: 2px; }
.narrow button { color: #6f7380; }
.mono { font-family: "DejaVu Sans Mono", monospace; }
.units { width: 89px; gap: 1px; }
.controls .on { background: #c78547; border: 1px solid #5a5b60; color: #401008; }
.clock { width: 262px; height: 50px; border: 1px solid #606164; background: #000; color: #82a8f5; font-size: 34px; line-height: 52px; text-align: center; }
.frame { width: 177px; }
.play { width: 51px; height: 50px; border: 1px solid #5a5b60; background: #363941; }
.play svg { width: 49px; height: 48px; }
.limit { display: flex; flex-direction: column; justify-content: space-between; height: 50px; padding-left: 3px; }
.limit div { display: flex; }
.limit button { height: 23px; width: 59px; border: 1px solid #5a5b60; background: #363941; }
.limit .on { width: 68px; }
</style>
